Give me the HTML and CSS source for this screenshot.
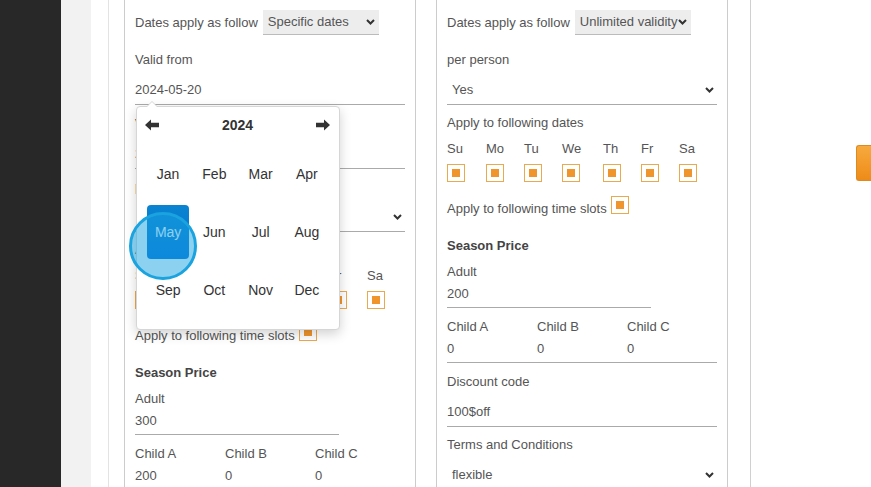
FILE: index.html
```html
<!DOCTYPE html>
<html lang="en">
<head>
    <meta charset="UTF-8">
    <meta name="viewport" content="width=device-width, initial-scale=1.0">
    <title>Ticket settings</title>
    <link rel="stylesheet" href="styles.css">
</head>
<body>
    <div class="app">
        <aside class="sidebar"></aside>
        <div class="gutter"></div>
        <main class="content">
            <div class="panel">
                <div class="cards">
                    <!-- specific dates -->
                    <section class="card">
                        <div class="apply-row">
                            <span>Dates apply as follow</span>
                            <div class="mini-select">
                                <span>Specific dates</span>
                                <svg class="chevron" width="9" height="6" viewBox="0 0 9 6"><path d="M1 1 L4.5 4.5 L8 1" fill="none" stroke="#333" stroke-width="2"/></svg>
                            </div>
                        </div>
                        <div class="field has-picker">
                            <label>Valid from</label>
                            <div class="input">2024-05-20</div>
                            <div class="datepicker">
                                <div class="dp-head">
                                    <svg width="14" height="12" viewBox="0 0 14 12"><path d="M0 6 L6 0.5 L6 3.8 L14 3.8 L14 8.2 L6 8.2 L6 11.5 Z" fill="#333"/></svg>
                                    <span class="dp-year">2024</span>
                                    <svg width="14" height="12" viewBox="0 0 14 12"><path d="M14 6 L8 0.5 L8 3.8 L0 3.8 L0 8.2 L8 8.2 L8 11.5 Z" fill="#333"/></svg>
                                </div>
                                <div class="dp-months">
                                    <span>Jan</span><span>Feb</span><span>Mar</span><span>Apr</span>
                                    <span class="active">May</span><span>Jun</span><span>Jul</span><span>Aug</span>
                                    <span>Sep</span><span>Oct</span><span>Nov</span><span>Dec</span>
                                </div>
                                <div class="tap"></div>
                            </div>
                        </div>
                        <div class="field">
                            <label>Valid until</label>
                            <div class="input">2024-12-31</div>
                        </div>
                        <div class="field">
                            <label>per person</label>
                            <div class="input select">
                                <span>Yes</span>
                                <svg class="chevron" width="9" height="6" viewBox="0 0 9 6"><path d="M1 1 L4.5 4.5 L8 1" fill="none" stroke="#333" stroke-width="2"/></svg>
                            </div>
                        </div>
                        <div class="days-label">Apply to following dates</div>
                        <div class="days">
                            <span>Su</span><span>Mo</span><span>Tu</span><span>We</span><span>Th</span><span>Fr</span><span>Sa</span>
                            <i class="check"></i><i class="check"></i><i class="check"></i><i class="check"></i><i class="check"></i><i class="check"></i><i class="check"></i>
                        </div>
                        <div class="slots">
                            <span>Apply to following time slots</span>
                            <i class="check"></i>
                        </div>
                        <h4 class="section-title">Season Price</h4>
                        <div class="field price adult">
                            <label>Adult</label>
                            <div class="input">300</div>
                        </div>
                        <div class="price-row">
                            <div class="field price">
                                <label>Child A</label>
                                <div class="input">200</div>
                            </div>
                            <div class="field price">
                                <label>Child B</label>
                                <div class="input">0</div>
                            </div>
                            <div class="field price">
                                <label>Child C</label>
                                <div class="input">0</div>
                            </div>
                        </div>
                    </section>

                    <!-- unlimited validity -->
                    <section class="card">
                        <div class="apply-row">
                            <span>Dates apply as follow</span>
                            <div class="mini-select">
                                <span>Unlimited validity</span>
                                <svg class="chevron" width="9" height="6" viewBox="0 0 9 6"><path d="M1 1 L4.5 4.5 L8 1" fill="none" stroke="#333" stroke-width="2"/></svg>
                            </div>
                        </div>
                        <div class="field">
                            <label>per person</label>
                            <div class="input select">
                                <span>Yes</span>
                                <svg class="chevron" width="9" height="6" viewBox="0 0 9 6"><path d="M1 1 L4.5 4.5 L8 1" fill="none" stroke="#333" stroke-width="2"/></svg>
                            </div>
                        </div>
                        <div class="days-label">Apply to following dates</div>
                        <div class="days">
                            <span>Su</span><span>Mo</span><span>Tu</span><span>We</span><span>Th</span><span>Fr</span><span>Sa</span>
                            <i class="check"></i><i class="check"></i><i class="check"></i><i class="check"></i><i class="check"></i><i class="check"></i><i class="check"></i>
                        </div>
                        <div class="slots">
                            <span>Apply to following time slots</span>
                            <i class="check"></i>
                        </div>
                        <h4 class="section-title">Season Price</h4>
                        <div class="field price adult">
                            <label>Adult</label>
                            <div class="input">200</div>
                        </div>
                        <div class="price-row">
                            <div class="field price">
                                <label>Child A</label>
                                <div class="input">0</div>
                            </div>
                            <div class="field price">
                                <label>Child B</label>
                                <div class="input">0</div>
                            </div>
                            <div class="field price">
                                <label>Child C</label>
                                <div class="input">0</div>
                            </div>
                        </div>
                        <div class="field">
                            <label>Discount code</label>
                            <div class="input">100$off</div>
                        </div>
                        <div class="field">
                            <label>Terms and Conditions</label>
                            <div class="input select">
                                <span>flexible</span>
                                <svg class="chevron" width="9" height="6" viewBox="0 0 9 6"><path d="M1 1 L4.5 4.5 L8 1" fill="none" stroke="#333" stroke-width="2"/></svg>
                            </div>
                        </div>
                    </section>
                </div>
            </div>
        </main>
    </div>
    <a class="side-tab" href="#"></a>
</body>
</html>
```

FILE: styles.css
```css
* {
    box-sizing: border-box;
    margin: 0;
    padding: 0;
}
html, body {
    height: 100%;
    overflow: hidden;
}
body {
    font-family: "Liberation Sans", Arial, sans-serif;
    font-size: 13px;
    line-height: 18px;
    color: #555;
    background-color: #fff;
}
.app {
    display: flex;
    min-height: 100vh;
}
.sidebar {
    width: 61px;
    background-color: #282828;
}
.gutter {
    width: 30px;
    background-color: #f2f2f2;
}
.content {
    flex: 1;
    padding-left: 17px;
}
.panel {
    width: 643px;
    min-height: 100%;
    padding-left: 15px;
    border-left: 1px solid #e3e3e3;
    border-right: 1px solid #d0d0d0;
}
.cards {
    display: flex;
    align-items: flex-start;
    gap: 20px;
}
.card {
    width: 292px;
    padding: 10px 10px 20px;
    border: 1px solid #ccc;
    border-top: none;
}
.apply-row {
    display: flex;
    align-items: center;
    gap: 5px;
    height: 25px;
    margin-bottom: 16px;
}
.mini-select {
    display: flex;
    align-items: center;
    justify-content: space-between;
    width: 116px;
    height: 25px;
    padding: 0 4px 0 5px;
    background-color: #ededed;
    border-bottom: 1px solid #bbb;
    white-space: nowrap;
}
.field {
    position: relative;
    margin-bottom: 9px;
}
.has-picker {
    margin-bottom: 10px;
}
.field label {
    display: block;
    margin-bottom: 7px;
}
.input {
    height: 29px;
    line-height: 28px;
    border-bottom: 1px solid #aaa;
}
.select {
    display: flex;
    align-items: center;
    justify-content: space-between;
    padding: 0 3px 0 5px;
}
.days-label {
    margin-bottom: 8px;
}
.days {
    display: grid;
    grid-template-columns: 39px 38px 38px 41px 38px 38px 38px;
    row-gap: 6px;
}
.check {
    position: relative;
    display: block;
    width: 18px;
    height: 18px;
    border: 1px solid #eba94f;
    background-color: #fff;
}
.check::after {
    content: "";
    position: absolute;
    left: 4px;
    top: 4px;
    width: 8px;
    height: 8px;
    background-color: #f0952c;
}
.slots {
    display: flex;
    align-items: flex-start;
    gap: 4px;
    margin-top: 14px;
}
.slots span {
    padding-top: 4px;
}
.section-title {
    margin-top: 19px;
    margin-bottom: 8px;
    font-size: 13px;
    font-weight: bold;
    color: #444;
}
.price {
    margin-bottom: 10px;
}
.price label {
    margin-bottom: 1px;
}
.price .input {
    height: 26px;
    line-height: 24px;
}
.adult {
    width: 204px;
}
.price-row {
    display: grid;
    grid-template-columns: 90px 90px 90px;
    border-bottom: 1px solid #aaa;
    margin-bottom: 10px;
}
.price-row .field {
    margin-bottom: 0;
}
.price-row .input {
    border-bottom: none;
    height: 25px;
}

/* month picker */
.datepicker {
    position: absolute;
    left: 1px;
    top: calc(100% + 1px);
    width: 204px;
    padding: 4px 9px 10px 8px;
    background-color: #fff;
    border: 1px solid #d6d6d6;
    border-radius: 4px;
    box-shadow: 0 4px 12px rgba(0,0,0,0.18);
    z-index: 5;
}
.datepicker::before {
    content: "";
    position: absolute;
    left: 9px;
    top: -6px;
    border-left: 6px solid transparent;
    border-right: 6px solid transparent;
    border-bottom: 6px solid #d6d6d6;
}
.datepicker::after {
    content: "";
    position: absolute;
    left: 10px;
    top: -5px;
    border-left: 5px solid transparent;
    border-right: 5px solid transparent;
    border-bottom: 5px solid #fff;
}
.dp-head {
    display: flex;
    align-items: center;
    justify-content: space-between;
    height: 28px;
    margin-bottom: 6px;
}
.dp-year {
    font-size: 14px;
    font-weight: bold;
    color: #333;
}
.dp-months {
    display: grid;
    grid-template-columns: repeat(4, 1fr);
}
.dp-months span {
    margin: 2px;
    height: 54px;
    line-height: 54px;
    text-align: center;
    font-size: 14px;
    color: #333;
    border-radius: 4px;
}
.dp-months span.active {
    color: #fff;
    background: linear-gradient(to bottom, #0a84d0, #006ed8);
}
.tap {
    position: absolute;
    left: -8px;
    top: 105px;
    width: 68px;
    height: 68px;
    border: 3px solid #1aa3df;
    border-radius: 50%;
    background-color: rgba(26,163,223,0.5);
}
.side-tab {
    position: fixed;
    right: 0;
    top: 145px;
    width: 15px;
    height: 36px;
    border: 1px solid #dc8a24;
    border-right: none;
    border-radius: 3px 0 0 3px;
    background: linear-gradient(to bottom, #f7aa3e, #ee8b18);
}
```
